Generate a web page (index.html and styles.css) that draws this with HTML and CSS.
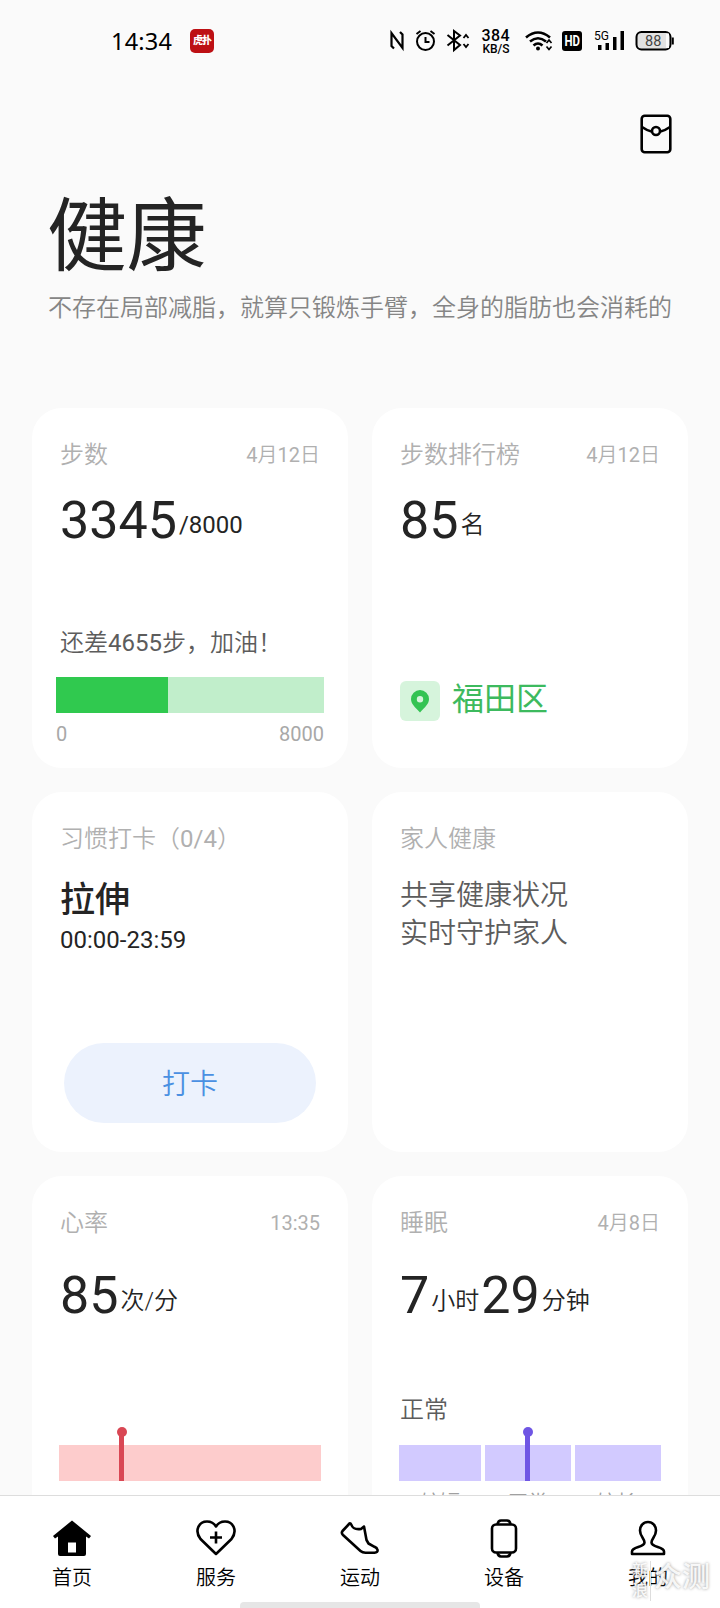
FILE: index.html
```html
<!DOCTYPE html>
<html lang="zh-CN">
<head>
<meta charset="utf-8">
<title>健康</title>
<link rel="stylesheet" href="styles.css">
</head>
<body>
<div class="screen">
  <header class="status">
    <span class="clock">14:34</span>
    <span class="app-badge">虎扑</span>
    <svg class="status-icons" width="310" height="36" viewBox="0 0 310 36" fill="none" stroke="#000" stroke-width="2">
      <path d="M14 26.500l-2.500-2.500V11l11 15V12.500L20 10" stroke-width="2.200"/>
      <circle cx="45.500" cy="19.500" r="8.500"/><path d="M45.500 15v5h4M36.500 12l4-3M54.500 12l-4-3"/>
      <path d="M67.500 13l12.500 10-6 5V9l6 4.500-12.500 10"/><path d="M83.500 16l2.500-3 2.500 3M83.500 22l2.500 3 2.500-3" stroke-width="1.800"/>
      <path d="M146 15.500q12-10 24 0M150 19.500q8-6.500 16 0M153.500 23.500q4.500-4 9 0" stroke-width="2.600"/><circle cx="158" cy="26.500" r="2" fill="#000" stroke="none"/>
      <path d="M166.500 21l2.500-3 2.500 3M166.500 24.500l2.500 3 2.500-3" stroke-width="1.700"/>
      <rect x="182" y="9" width="20" height="20" rx="3" fill="#000" stroke="none"/>
      <path d="M218 28v-5h3.500v5zM225.500 28v-7h3.500v7zM233 28V15h3.500v13zM240.500 28V9h3.500v19z" fill="#000" stroke="none"/>
      <rect x="256.500" y="10" width="34" height="17.500" rx="5" fill="#e2e2e2"/><rect x="286" y="11.500" width="3" height="14.500" fill="#fafafa" stroke="none"/><path d="M292.800 15.500v7" stroke-width="2"/>
      <g fill="#000" stroke="none" class="status-text">
        <text x="101.500" y="18.500" font-size="16" font-weight="500" textLength="28">384</text>
        <text x="102.500" y="30.500" font-size="12" font-weight="500" textLength="27">KB/S</text>
        <text x="184.500" y="24" font-size="14.500" font-weight="700" fill="#fff" textLength="15.500" lengthAdjust="spacingAndGlyphs">HD</text>
        <text x="214" y="18" font-size="12.500" font-weight="400" textLength="15" lengthAdjust="spacingAndGlyphs">5G</text>
        <text x="265" y="24" font-size="14.500" font-weight="400" fill="#444">88</text>
      </g>
    </svg>
  </header>

  <div class="toolbar">
    <svg width="32" height="40" viewBox="0 0 32 40" fill="none" stroke="#000" stroke-width="2.600">
      <rect x="1.700" y="1.700" width="28.600" height="36.600" rx="3"/>
      <path d="M2 13q5 3.500 9.500 4.500M30 13q-5 3.500-9.500 4.500"/><circle cx="16" cy="17" r="4"/>
    </svg>
  </div>
  <h1 class="title">健康</h1>
  <p class="tip">不存在局部减脂，就算只锻炼手臂，全身的脂肪也会消耗的</p>

  <main class="cards">
    <section class="card">
      <div class="head"><h2>步数</h2><time><em>4</em>月<em>12</em>日</time></div>
      <div class="value"><b>3345</b><small><em>/8000</em></small></div>
      <p class="note steps-note">还差<em>4655</em>步，加油！</p>
      <div class="progress"><div class="progress-fill" style="width:41.800%"></div></div>
      <div class="scale"><em>0</em><em>8000</em></div>
    </section>
    <section class="card">
      <div class="head"><h2>步数排行榜</h2><time><em>4</em>月<em>12</em>日</time></div>
      <div class="value"><b>85</b><small>名</small></div>
      <div class="place">
        <span class="pin"><svg width="20" height="24" viewBox="0 0 20 24"><path fill="#34c353" fill-rule="evenodd" d="M10 1a9 9 0 0 1 9 9c0 5-4 8-9 13.500C5 18 1 15 1 10a9 9 0 0 1 9-9zm0 6a3.200 3.200 0 1 0 0 6.400A3.200 3.200 0 0 0 10 7z"/></svg></span>
        <span class="district">福田区</span>
      </div>
    </section>
    <section class="card">
      <div class="head"><h2>习惯打卡（<em>0/4</em>）</h2></div>
      <h3 class="habit">拉伸</h3>
      <p class="hours"><em>00:00-23:59</em></p>
      <button class="check">打卡</button>
    </section>
    <section class="card">
      <div class="head"><h2>家人健康</h2></div>
      <p class="family">共享健康状况<br>实时守护家人</p>
    </section>
    <section class="card">
      <div class="head"><h2>心率</h2><time><em>13:35</em></time></div>
      <div class="value low"><b>85</b><small>次/分</small></div>
      <div class="note range-note"></div>
      <div class="range heart"><i></i><span class="marker" style="left:24%"></span></div>
      <div class="ticks heart-ticks"><em>40</em><em>220</em></div>
    </section>
    <section class="card">
      <div class="head"><h2>睡眠</h2><time><em>4</em>月<em>8</em>日</time></div>
      <div class="value low"><b>7</b><small>小时</small><b>29</b><small>分钟</small></div>
      <p class="note range-note">正常</p>
      <div class="range sleep"><i></i><i></i><i></i><span class="marker" style="left:49.200%"></span></div>
      <div class="ticks sleep-ticks"><span>较短</span><span>正常</span><span>较长</span></div>
    </section>
  </main>

  <nav class="nav">
    <a class="tab"><svg width="40" height="40" viewBox="0 0 40 40"><path fill-rule="evenodd" d="M20 1.500L39 17l-2 2.500-3-2V35q0 2-2 2H8q-2 0-2-2V17.500l-3 2L1 17zM16 23.500v10h8v-10z"/></svg>首页</a>
    <a class="tab"><svg width="40" height="40" viewBox="0 0 40 40"><path d="M20 35L4.500 20C-2 11.500 3 2.500 11 2.500q6 0 9 5 3-5 9-5c8 0 13 9 6.500 17.500zM20 12.500v12M14 18.500h12"/></svg>服务</a>
    <a class="tab"><svg width="40" height="40" viewBox="0 0 40 40"><path d="M9.500 4.500L2.500 12q-1.500 2 .5 4l17.500 16q2 1.800 5 1.800h9q3.500-.3 3-3-.5-2-3-3l-6-3.300-2-3.500-2.500-13.500-3 2.500q-8 1-9.500-4-1-2-2-1.500z"/></svg>运动</a>
    <a class="tab"><svg width="40" height="40" viewBox="0 0 40 40"><rect x="8" y="5.500" width="24" height="28" rx="4"/><path d="M13.500 5.500q.5-4 3.500-4h6q3 0 3.500 4M13.500 33.500q.5 4 3.500 4h6q3 0 3.500-4"/></svg>设备</a>
    <a class="tab"><svg width="40" height="40" viewBox="0 0 40 40"><path d="M20 3c-5 0-8 4-8 8.500 0 6 4.500 8 4.500 12 0 5-12.500 4-12.500 9v2.500h32v-2.500c0-5-12.500-4-12.500-9 0-4 4.500-6 4.500-12 0-4.500-3-8.500-8-8.500z"/></svg>我的</a>
    <span class="home-bar"></span>
    <span class="watermark"><span class="wm-small">新<br>浪</span><span class="wm-large">众测</span></span>
  </nav>
</div>
</body>
</html>
```

FILE: styles.css
```css
* { box-sizing: border-box; margin: 0; padding: 0; }
body { background: #fafafa; font-family: Roboto, "Noto Sans CJK SC", sans-serif; font-weight: 350; color: #242424; }
svg { display: block; }
em { font-style: normal; font-weight: 400; }
.screen { width: 720px; height: 1608px; overflow: hidden; position: relative; display: flex; flex-direction: column; }

.status { height: 82px; flex: none; display: flex; align-items: center; padding-left: 111px; }
.clock { width: 79px; font: 400 23.500px/40px "Noto Sans", sans-serif; letter-spacing: .2px; color: #000; }
.app-badge { width: 24px; height: 24px; border-radius: 5px; background: #bd1014; color: #fff; font-size: 10px; line-height: 23px; font-weight: 900; text-align: center; letter-spacing: -1px; }
.status-icons { margin-left: 166px; margin-bottom: 2px; }
.status-text { font-family: Roboto, sans-serif; }

.toolbar { height: 109px; flex: none; display: flex; justify-content: flex-end; padding: 32px 48px 0 0; }
.title { font-size: 80px; line-height: 92px; height: 91px; flex: none; font-weight: 400; padding-left: 47px; letter-spacing: -.5px; }
.tip { font-size: 24px; line-height: 36px; height: 126px; flex: none; padding: 8px 0 0 48px; color: #858585; white-space: nowrap; }

.cards { display: grid; grid-template-columns: 316px 316px; grid-auto-rows: 360px; gap: 24px; padding: 0 32px; flex: none; }
.card { background: #fff; border-radius: 30px; padding: 31px 28px 0; display: flex; flex-direction: column; }
.head { height: 32px; flex: none; display: flex; justify-content: space-between; align-items: center; color: #b0b0b0; }
.head h2 { font-size: 24px; line-height: 32px; font-weight: 350; white-space: nowrap; }
.head time { font-size: 20px; line-height: 32px; }
.value { height: 80px; margin-top: 10px; flex: none; display: flex; align-items: flex-start; }
.value b { font: 400 52px/80px Roboto, sans-serif; }
.value small { font-size: 24px; line-height: 32px; margin: 28px 2px 0; }
.low { margin-top: 17px; }
.low small { margin-top: 29px; }
.note { font-size: 24px; line-height: 36px; height: 36px; flex: none; color: #5c5c5c; }
.steps-note { margin-top: 64px; }
.progress { height: 36px; margin: 16px -4px 0; background: #c1eecb; flex: none; }
.progress-fill { height: 100%; background: #30c94f; }
.scale { display: flex; justify-content: space-between; margin: 9px -4px 0; font-size: 20px; line-height: 24px; color: #a8a8a8; }

.place { display: flex; margin-top: 120px; gap: 12px; }
.pin { width: 40px; height: 40px; border-radius: 6px; background: #d6f4dc; display: flex; align-items: center; justify-content: center; }
.district { font-size: 32px; line-height: 36px; color: #3dba5e; font-weight: 400; }

.habit { font-size: 35px; line-height: 48px; font-weight: 500; margin-top: 22px; }
.hours { font-size: 24px; line-height: 32px; margin-top: -1px; }
.check { width: 252px; height: 80px; margin: 87px 0 0 4px; padding-bottom: 2px; border: 0; border-radius: 40px; background: #ecf2fd; color: #4a90e2; font: inherit; font-size: 28px; flex: none; }
.family { font-size: 28px; line-height: 38px; margin-top: 22px; color: #5c5c5c; }

.range-note { margin-top: 56px; }
.range { height: 36px; flex: none; margin: 17px -1px 0; display: flex; gap: 4px; position: relative; color: #d94754; }
.range i { flex: 1; background: #fdcccc; }
.sleep { color: #6f56e4; }
.sleep i { background: #d2caff; }
.sleep i:first-child { flex: none; width: 82px; }
.marker { position: absolute; bottom: 0; width: 5px; height: 49px; margin-left: -2.500px; background: currentColor; }
.marker::before { content: ""; position: absolute; left: -2.500px; top: -5px; width: 10px; height: 10px; border-radius: 50%; background: currentColor; }
.ticks { display: flex; justify-content: space-between; font-size: 20px; line-height: 28px; margin-top: 8px; color: #a0a0a0; }
.heart-ticks { padding-left: 4px; line-height: 24px; margin-top: 10px; }
.sleep-ticks { justify-content: space-around; margin-left: -4px; }

.nav { position: absolute; left: 0; right: 0; bottom: 0; height: 113px; background: #fff; border-top: 1px solid #ddd; display: grid; grid-template-columns: repeat(5, 1fr); }
.tab { display: flex; flex-direction: column; align-items: center; padding-top: 23px; gap: 4px; font-size: 20px; line-height: 30px; color: #000; }
.tab svg { fill: none; stroke: #000; stroke-width: 2.600; stroke-linejoin: round; }
.tab:first-child svg { fill: #000; stroke: none; }
.home-bar { position: absolute; left: 240px; bottom: 0; width: 240px; height: 6px; border-radius: 4px 4px 0 0; background: #e6e6e6; }
.watermark { position: absolute; left: 632px; top: 65px; display: flex; gap: 3px; color: rgba(255,255,255,.9); text-shadow: 0 0 3px #999; }
.wm-small { font-size: 16px; line-height: 20px; padding-right: 2px; border-right: 1px solid #ddd; font-weight: 500; }
.wm-large { font-size: 28px; line-height: 34px; font-weight: 500; }
```
